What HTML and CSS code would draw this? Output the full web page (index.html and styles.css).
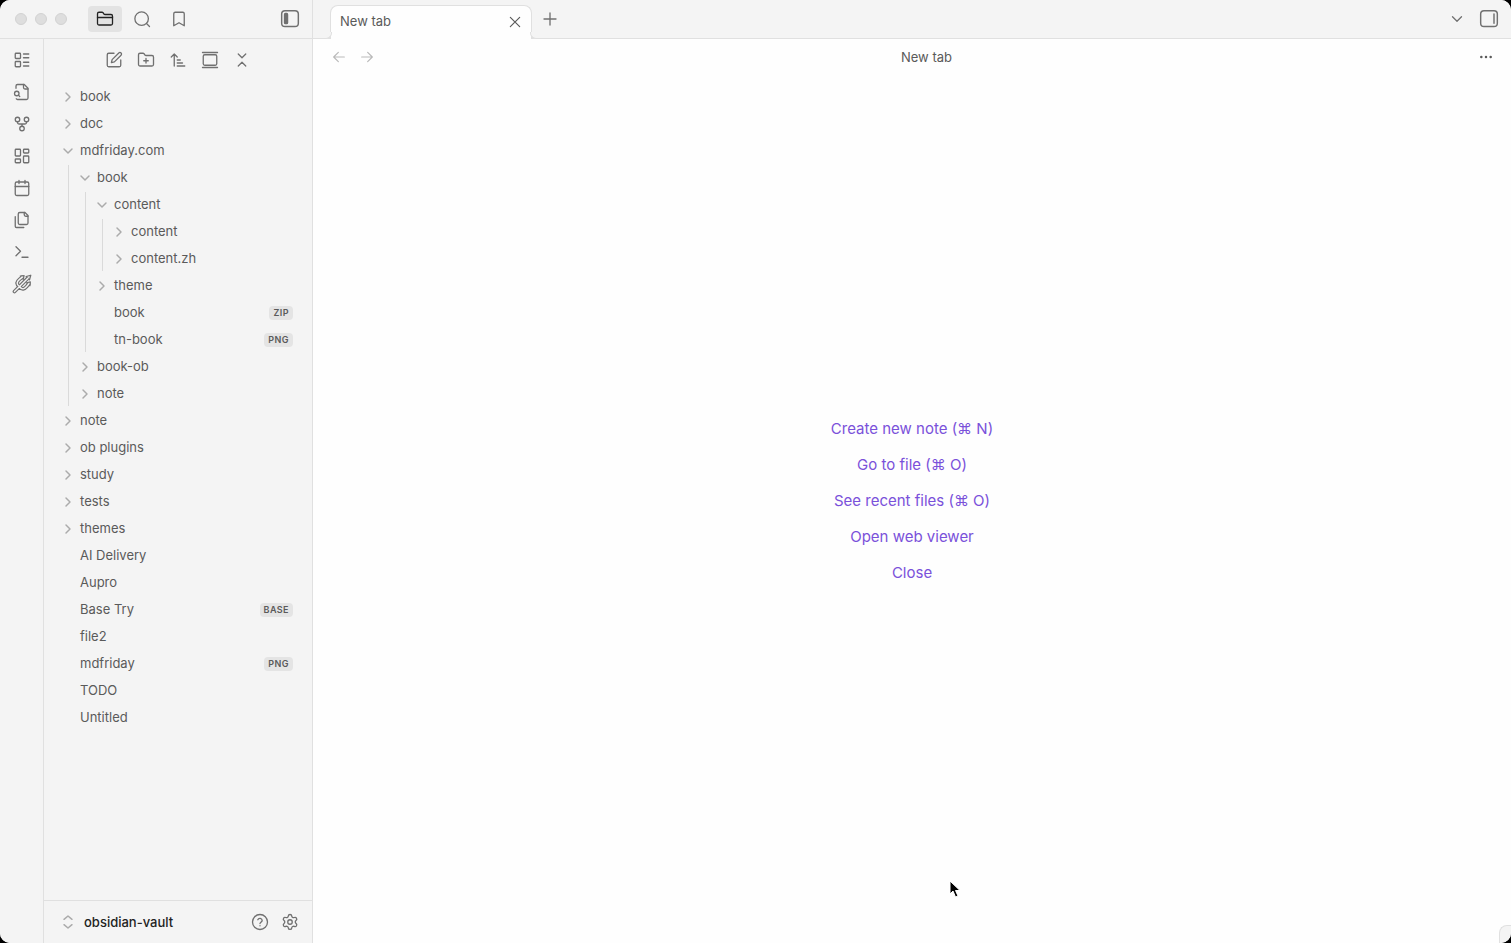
FILE: index.html
```html
<!DOCTYPE html>
<html lang="en">
<head>
<meta charset="utf-8">
<title>New tab - obsidian-vault</title>
<link rel="stylesheet" href="styles.css">
</head>
<body>
<svg class="sprite" aria-hidden="true">
  <symbol id="chevron-right" viewBox="0 0 24 24"><path d="m9 18 6-6-6-6"/></symbol>
  <symbol id="chevron-down" viewBox="0 0 24 24"><path d="m6 9 6 6 6-6"/></symbol>
</svg>
<div class="app">
  <aside class="left">
    <header class="titlebar">
      <span class="light"></span><span class="light"></span><span class="light"></span>
      <nav class="side-tabs">
        <button class="side-tab active" aria-label="Files"><svg class="icon" viewBox="0 0 24 24"><path d="M20 20a2 2 0 0 0 2-2V8a2 2 0 0 0-2-2h-7.9a2 2 0 0 1-1.69-.9L9.6 3.9A2 2 0 0 0 7.93 3H4a2 2 0 0 0-2 2v13a2 2 0 0 0 2 2Z"/><path d="M2 10h20"/></svg></button>
        <button class="side-tab" aria-label="Search"><svg class="icon" viewBox="0 0 24 24"><circle cx="11.500" cy="11.500" r="9"/><path d="m22 22-4-4"/></svg></button>
        <button class="side-tab" aria-label="Bookmarks"><svg class="icon" viewBox="0 0 24 24"><path d="m19 21-7-4-7 4V5a2 2 0 0 1 2-2h10a2 2 0 0 1 2 2v16z"/></svg></button>
      </nav>
      <button class="toggle" aria-label="Collapse sidebar"><svg class="icon big" viewBox="0 0 24 24"><rect x="2" y="2" width="20" height="19" rx="4"/><rect class="fill" x="5.500" y="5.500" width="3.500" height="12" rx="1"/></svg></button>
    </header>
    <div class="left-body">
      <nav class="ribbon">
        <button aria-label="Layout"><svg class="icon" viewBox="0 0 24 24"><rect width="7" height="7" x="3" y="3" rx="1"/><rect width="7" height="7" x="3" y="14" rx="1"/><path d="M14 4h7M14 9h7M14 15h7M14 20h7"/></svg></button>
        <button aria-label="Quick switcher"><svg class="icon" viewBox="0 0 24 24"><path d="M14 2v4a2 2 0 0 0 2 2h4"/><path d="M4.300 21a2 2 0 0 0 1.700 1H18a2 2 0 0 0 2-2V7l-5-5H6a2 2 0 0 0-2 2v3"/><path d="m9 18-1.500-1.500"/><circle cx="5" cy="14" r="3"/></svg></button>
        <button aria-label="Graph view"><svg class="icon" viewBox="0 0 24 24"><circle cx="12" cy="18" r="3"/><circle cx="6" cy="6" r="3"/><circle cx="18" cy="6" r="3"/><path d="M18 9v1a2 2 0 0 1-2 2H8a2 2 0 0 1-2-2V9M12 12v3"/></svg></button>
        <button aria-label="Canvas"><svg class="icon" viewBox="0 0 24 24"><rect width="7" height="9" x="3" y="3" rx="1"/><rect width="7" height="5" x="14" y="3" rx="1"/><rect width="7" height="9" x="14" y="12" rx="1"/><rect width="7" height="5" x="3" y="16" rx="1"/></svg></button>
        <button aria-label="Daily note"><svg class="icon" viewBox="0 0 24 24"><path d="M8 2v4M16 2v4M3 10h18"/><rect width="18" height="18" x="3" y="4" rx="2"/></svg></button>
        <button aria-label="Templates"><svg class="icon" viewBox="0 0 24 24"><path d="M20 7h-3a2 2 0 0 1-2-2V2"/><path d="M9 18a2 2 0 0 1-2-2V4a2 2 0 0 1 2-2h7l4 4v10a2 2 0 0 1-2 2Z"/><path d="M3 7.600v12.800A1.600 1.600 0 0 0 4.600 22h9.800"/></svg></button>
        <button aria-label="Command palette"><svg class="icon" viewBox="0 0 24 24"><path d="m4 17 6-6-6-6M12 19h8"/></svg></button>
        <button aria-label="Publish site"><svg class="icon trident" viewBox="0 0 24 24"><g class="outer"><path d="M3 21 19 5M9 15C4.500 12 6 9 9 6.500L12 4M9 15c3 4.500 6 3 8.500 0l2.500-3"/></g><g class="head"><path d="m17 3 5.500-1.500L21 7zM10 2.500l4.500-.5-1 4.500zM17.500 10.500l4.500-1-.5 4.500z"/></g><g class="inner"><path d="M3 21 19 5M9 15C4.500 12 6 9 9 6.500L12 4M9 15c3 4.500 6 3 8.500 0l2.500-3"/></g></svg></button>
      </nav>
      <section class="explorer">
        <div class="tools">
          <button aria-label="New note"><svg class="icon" viewBox="0 0 24 24"><path d="M12 3H5a2 2 0 0 0-2 2v14a2 2 0 0 0 2 2h14a2 2 0 0 0 2-2v-7"/><path d="M18.400 2.600a2.100 2.100 0 0 1 3 3L12.500 14.500 8.500 15.500l1-4Z"/></svg></button>
          <button aria-label="New folder"><svg class="icon" viewBox="0 0 24 24"><path d="M12 10v6M9 13h6"/><path d="M20 20a2 2 0 0 0 2-2V8a2 2 0 0 0-2-2h-7.900a2 2 0 0 1-1.690-.9L9.600 3.900A2 2 0 0 0 7.930 3H4a2 2 0 0 0-2 2v13a2 2 0 0 0 2 2Z"/></svg></button>
          <button aria-label="Sort order"><svg class="icon" viewBox="0 0 24 24"><path d="m3 8 4-4 4 4M7 4v16M11 12h4M11 16h7M11 20h10"/></svg></button>
          <button aria-label="Auto-reveal"><svg class="icon" viewBox="0 0 24 24"><path d="M2 2h20"/><rect width="18" height="14" x="3" y="5" rx="2"/><path d="M2 22h20"/></svg></button>
          <button aria-label="Collapse all"><svg class="icon" viewBox="0 0 24 24"><path d="m7 20 5-5 5 5M7 4l5 5 5-5"/></svg></button>
        </div>
        <ul class="tree">
          <li><button class="row"><svg class="icon chev"><use href="#chevron-right"/></svg>book</button></li>
          <li><button class="row"><svg class="icon chev"><use href="#chevron-right"/></svg>doc</button></li>
          <li><button class="row"><svg class="icon chev"><use href="#chevron-down"/></svg>mdfriday.com</button>
            <ul>
              <li><button class="row"><svg class="icon chev"><use href="#chevron-down"/></svg>book</button>
                <ul>
                  <li><button class="row"><svg class="icon chev"><use href="#chevron-down"/></svg>content</button>
                    <ul>
                      <li><button class="row"><svg class="icon chev"><use href="#chevron-right"/></svg>content</button></li>
                      <li><button class="row"><svg class="icon chev"><use href="#chevron-right"/></svg>content.zh</button></li>
                    </ul>
                  </li>
                  <li><button class="row"><svg class="icon chev"><use href="#chevron-right"/></svg>theme</button></li>
                  <li><button class="row file">book<span class="tag">ZIP</span></button></li>
                  <li><button class="row file">tn-book<span class="tag">PNG</span></button></li>
                </ul>
              </li>
              <li><button class="row"><svg class="icon chev"><use href="#chevron-right"/></svg>book-ob</button></li>
              <li><button class="row"><svg class="icon chev"><use href="#chevron-right"/></svg>note</button></li>
            </ul>
          </li>
          <li><button class="row"><svg class="icon chev"><use href="#chevron-right"/></svg>note</button></li>
          <li><button class="row"><svg class="icon chev"><use href="#chevron-right"/></svg>ob plugins</button></li>
          <li><button class="row"><svg class="icon chev"><use href="#chevron-right"/></svg>study</button></li>
          <li><button class="row"><svg class="icon chev"><use href="#chevron-right"/></svg>tests</button></li>
          <li><button class="row"><svg class="icon chev"><use href="#chevron-right"/></svg>themes</button></li>
          <li><button class="row file">AI Delivery</button></li>
          <li><button class="row file">Aupro</button></li>
          <li><button class="row file">Base Try<span class="tag">BASE</span></button></li>
          <li><button class="row file">file2</button></li>
          <li><button class="row file">mdfriday<span class="tag">PNG</span></button></li>
          <li><button class="row file">TODO</button></li>
          <li><button class="row file">Untitled</button></li>
        </ul>
        <footer class="vault">
          <button class="vault-name"><svg class="icon chev" viewBox="0 0 24 24"><path d="m6 8 6-5 6 5M6 16l6 5 6-5"/></svg>obsidian-vault</button>
          <button aria-label="Help"><svg class="icon" viewBox="0 0 24 24"><circle cx="12" cy="12" r="10"/><path d="M9.100 9a3 3 0 0 1 5.800 1c0 2-2.900 2.700-2.900 4M12 17h.01"/></svg></button>
          <button aria-label="Settings"><svg class="icon" viewBox="0 0 24 24"><path d="M9.700 4.100a2.340 2.340 0 0 1 4.660 0 2.340 2.340 0 0 0 3.320 1.920 2.340 2.340 0 0 1 2.330 4.030 2.340 2.340 0 0 0 0 3.830 2.340 2.340 0 0 1-2.330 4.030 2.340 2.340 0 0 0-3.320 1.920 2.340 2.340 0 0 1-4.660 0 2.340 2.340 0 0 0-3.320-1.920 2.340 2.340 0 0 1-2.330-4.030 2.340 2.340 0 0 0 0-3.830 2.340 2.340 0 0 1 2.330-4.030A2.340 2.340 0 0 0 9.700 4.100"/><circle cx="12" cy="12" r="3"/></svg></button>
        </footer>
      </section>
    </div>
  </aside>
  <main class="main">
    <header class="tabbar">
      <div class="tab"><span>New tab</span><button aria-label="Close tab"><svg class="icon small" viewBox="0 0 24 24"><path d="M5 5l14 14M19 5 5 19"/></svg></button></div>
      <button class="new-tab" aria-label="New tab"><svg class="icon" viewBox="0 0 24 24"><path d="M4 12h16M12 4v16"/></svg></button>
      <button class="tab-list" aria-label="Tab list"><svg class="icon" viewBox="0 0 24 24"><path d="m6 9 6 6 6-6"/></svg></button>
      <button aria-label="Expand sidebar"><svg class="icon big" viewBox="0 0 24 24"><rect x="2" y="2" width="20" height="19" rx="4"/><path d="M18 6v11"/></svg></button>
    </header>
    <header class="viewbar">
      <button class="muted" aria-label="Back"><svg class="icon small" viewBox="0 0 24 24"><path d="m11 19-7-7 7-7M20 12H4"/></svg></button>
      <button class="muted" aria-label="Forward"><svg class="icon small" viewBox="0 0 24 24"><path d="M4 12h16M13 5l7 7-7 7"/></svg></button>
      <h1>New tab</h1>
      <button aria-label="More options"><svg class="icon small" viewBox="0 0 24 24"><g class="fill"><circle cx="5" cy="12" r="1"/><circle cx="12" cy="12" r="1"/><circle cx="19" cy="12" r="1"/></g></svg></button>
    </header>
    <div class="empty">
      <a href="#">Create new note (⌘ N)</a>
      <a href="#">Go to file (⌘ O)</a>
      <a href="#">See recent files (⌘ O)</a>
      <a href="#">Open web viewer</a>
      <a href="#">Close</a>
    </div>
  </main>
  <div class="status"></div>
  <svg class="cursor" viewBox="0 0 12 18"><path d="M1 1v13l3-3 2.500 6 2.500-1-2.500-5.500H11z"/></svg>
</div>
</body>
</html>
```
FILE: styles.css
```css
* { box-sizing: border-box; }
:root {
  --side: #f4f4f4;
  --line: #e0e0e0;
  --text: #5a5a5a;
  --icon: #707070;
  --accent: #7a51da;
}
body {
  margin: 0;
  background: #000;
  color: var(--text);
  font: 13px/17px Inter, "Noto Sans", "DejaVu Sans", sans-serif;
}
button {
  display: flex;
  align-items: center;
  justify-content: center;
  padding: 0;
  border: 0;
  background: none;
  color: inherit;
  font: inherit;
}
.sprite { display: none; }
.icon {
  display: block;
  flex: none;
  width: 18px;
  height: 18px;
  fill: none;
  stroke: currentColor;
  stroke-width: 1.75;
  stroke-linecap: round;
  stroke-linejoin: round;
}
.icon.big { width: 20px; height: 20px; }
.icon.small { width: 16px; height: 16px; }
.icon.chev { width: 16px; height: 16px; stroke-width: 2.2; color: #ababab; }
.icon.trident { width: 20px; height: 20px; }
.trident .outer { stroke-width: 4.5; }
.trident .head { fill: var(--side); stroke-width: 1.5; }
.trident .inner { stroke: var(--side); stroke-width: 1.7; }
.fill { fill: currentColor; }

.app {
  position: relative;
  display: flex;
  height: 100vh;
  overflow: hidden;
  border-radius: 10px;
  background: #fefefe;
}
.left {
  display: flex;
  flex-direction: column;
  flex: 0 0 313px;
  border-right: 1px solid var(--line);
  background: var(--side);
  color: var(--icon);
}
.titlebar {
  display: flex;
  align-items: center;
  gap: 8px;
  height: 39px;
  padding: 0 12px 0 15px;
  border-bottom: 1px solid var(--line);
}
.light {
  width: 12px;
  height: 12px;
  border: 1px solid #d2d2d2;
  border-radius: 50%;
  background: #dedede;
}
.side-tabs { display: flex; gap: 3px; flex: 1; margin-left: 13px; }
.side-tab { width: 34px; height: 26px; border-radius: 4px; }
.side-tab.active { background: #e3e3e3; color: #222; }
.left-body { display: flex; flex: 1; min-height: 0; }
.ribbon {
  display: flex;
  flex-direction: column;
  align-items: center;
  gap: 6px;
  flex: 0 0 44px;
  padding-top: 8px;
  border-right: 1px solid var(--line);
}
.ribbon button, .tools button { width: 26px; height: 26px; }
.explorer { display: flex; flex-direction: column; flex: 1; min-width: 0; }
.tools {
  display: flex;
  justify-content: center;
  gap: 6px;
  padding: 8px 0 11px;
}
.tree, .tree ul, .tree li { display: flex; flex-direction: column; gap: 2px; }
.tree, .tree ul { margin: 0; padding: 0; list-style: none; }
.tree { flex: 1; padding: 0 19px 0 16px; overflow: hidden; }
.tree ul { margin-left: 8px; padding-left: 8px; border-left: 1px solid #dadada; }
.row {
  justify-content: flex-start;
  gap: 4px;
  height: 25px;
  color: var(--text);
  text-align: left;
}
.row.file { padding-left: 20px; }
.tag {
  margin-left: auto;
  padding: 0 4px;
  border-radius: 4px;
  background: #e4e4e4;
  font-size: 9px;
  font-weight: 600;
  line-height: 14px;
  letter-spacing: 0.05em;
}
.vault {
  display: flex;
  align-items: center;
  gap: 4px;
  height: 43px;
  padding: 0 9px 0 16px;
  border-top: 1px solid var(--line);
}
.vault button { width: 26px; height: 26px; }
.vault .vault-name {
  flex: 1;
  justify-content: flex-start;
  gap: 8px;
  color: #222;
  font-weight: 500;
}

.main { display: flex; flex-direction: column; flex: 1; min-width: 0; }
.tabbar {
  display: flex;
  align-items: center;
  height: 39px;
  padding: 0 12px 0 17px;
  border-bottom: 1px solid var(--line);
  background: var(--side);
  color: var(--icon);
}
.tab {
  position: relative;
  display: flex;
  align-items: center;
  justify-content: space-between;
  flex: 0 1 202px;
  align-self: flex-end;
  height: 34px;
  margin-bottom: -1px;
  padding: 0 8px 2px 9px;
  border: 1px solid var(--line);
  border-bottom: 0;
  border-radius: 8px 8px 0 0;
  background: #fefefe;
  color: var(--text);
}
.tab::before, .tab::after {
  content: "";
  position: absolute;
  bottom: 0;
  width: 6px;
  height: 6px;
  border: 1px solid var(--line);
  border-top: 0;
  background: var(--side);
}
.tab::before { left: -6px; border-left: 0; border-radius: 0 0 6px 0; }
.tab::after { right: -6px; border-right: 0; border-radius: 0 0 0 6px; }
.new-tab { width: 24px; height: 24px; margin: 0 auto 0 6px; }
.tab-list { margin-right: 13px; }
.viewbar {
  display: flex;
  align-items: center;
  gap: 2px;
  height: 36px;
  padding: 0 12px 0 13px;
}
.viewbar button { width: 26px; height: 26px; }
.viewbar .muted { color: #b9b9b9; }
.viewbar h1 {
  flex: 1;
  margin: 0;
  font-size: 13px;
  font-weight: 400;
  text-align: center;
}
.empty {
  display: flex;
  flex-direction: column;
  align-items: center;
  justify-content: center;
  gap: 12px;
  flex: 1;
  padding-bottom: 16px;
}
.empty a {
  color: var(--accent);
  font-size: 15px;
  line-height: 24px;
  text-decoration: none;
}
.status {
  position: absolute;
  right: 0;
  bottom: 0;
  width: 12px;
  height: 18px;
  border: 1px solid var(--line);
  border-width: 1px 0 0 1px;
  border-radius: 8px 0 0 0;
  background: var(--side);
}
.cursor {
  position: absolute;
  top: 880px;
  left: 949px;
  width: 12px;
  height: 18px;
  fill: #000;
  stroke: #fff;
}
```
